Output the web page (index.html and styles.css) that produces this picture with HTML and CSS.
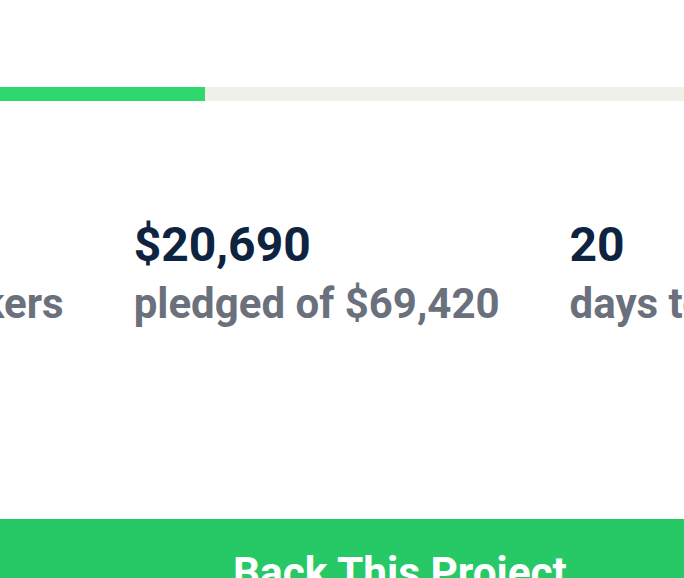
FILE: index.html
```html
<!DOCTYPE html>
<html lang="en">
<head>
<meta charset="utf-8">
<title>Project stats</title>
<link rel="stylesheet" href="styles.css">
</head>
<body>
<main class="card">
  <div class="progress"><div class="progress-fill" style="width: 205px"></div></div>
  <section class="stats">
    <div class="stat">
      <div class="stat-value">69</div>
      <div class="stat-label">backers</div>
    </div>
    <div class="stat">
      <div class="stat-value">$20,690</div>
      <div class="stat-label">pledged of $69,420</div>
    </div>
    <div class="stat">
      <div class="stat-value">20</div>
      <div class="stat-label">days to go</div>
    </div>
  </section>
  <div class="actions">
    <button class="back-btn" type="button">Back This Project</button>
  </div>
</main>
</body>
</html>
```
FILE: styles.css
```css
html, body {
  margin: 0;
  padding: 0;
  background: #ffffff;
}
body {
  width: 684px;
  height: 578px;
  overflow: hidden;
  font-family: Roboto, "Liberation Sans", sans-serif;
}
.card {
  display: flex;
  flex-direction: column;
  padding-top: 87px;
}
.progress {
  height: 14px;
  width: 684px;
  background: #f1efea;
}
.progress-fill {
  height: 100%;
  background: #2dd86c;
}
.stats {
  display: flex;
  gap: 70px;
  margin-left: -86px;
  margin-top: 116px;
  white-space: nowrap;
}
.stat {
  display: flex;
  flex-direction: column;
}
.stat-value {
  font-size: 48px;
  font-weight: 700;
  line-height: 56px;
  color: #0d2340;
}
.stat-label {
  font-size: 42px;
  font-weight: 700;
  line-height: 50px;
  color: #6a707c;
  margin-top: 6px;
}
.actions {
  margin-top: 190px;
  margin-left: -40px;
  width: 880px;
}
.back-btn {
  display: block;
  width: 100%;
  border: 0;
  background: #26c965;
  color: #ffffff;
  font-family: Roboto, "Liberation Sans", sans-serif;
  font-size: 42.4px;
  font-weight: 700;
  line-height: 50px;
  padding: 29px 0 28px;
  text-align: center;
}
```
